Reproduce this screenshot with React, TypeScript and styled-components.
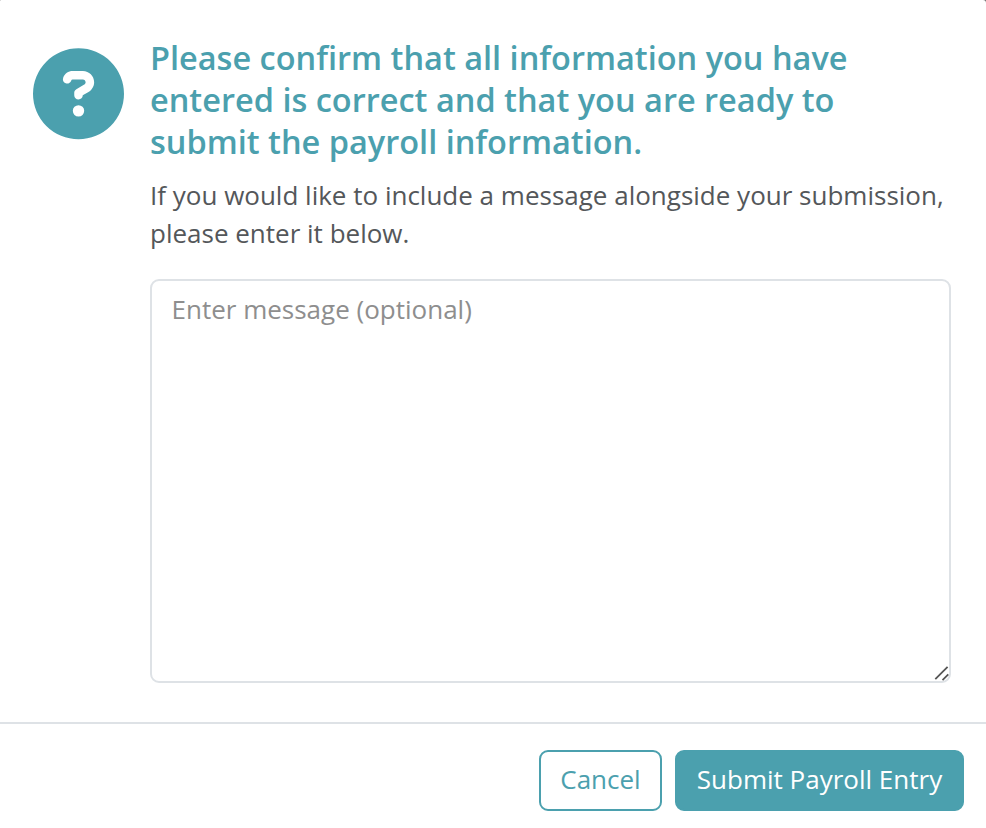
import React from "react";
import styled, { createGlobalStyle } from "styled-components";

const teal = "#4ba0ae";
const line = "#dee2e6";

const GlobalStyle = createGlobalStyle`
  *, *::before, *::after { box-sizing: border-box; }
  body { margin: 0; background: #6d6d6d; font-family: "Open Sans", sans-serif; }
`;

const Dialog = styled.section`
  display: flex;
  flex-direction: column;
  height: 828px;
  border-radius: 1px 3px 0 0;
  background: #fff;
`;

const Body = styled.div`
  display: flex;
  gap: 26px;
  height: 722px;
  padding: 37px 35px 0 33px;
`;

const Icon = styled.svg`
  flex: none;
  width: 91px;
  height: 92px;
  margin-top: 11px;
`;

const Content = styled.div`
  flex: 1;
  min-width: 0;
`;

const Title = styled.h1`
  margin: 0;
  color: ${teal};
  font-size: 32.5px;
  font-weight: 600;
  line-height: 42px;
  white-space: nowrap;
`;

const Description = styled.p`
  margin: 13px 0 27px;
  color: #54575a;
  font-size: 26px;
  line-height: 38px;
  white-space: nowrap;
`;

const Field = styled.div`
  display: grid;
  height: 404px;
`;

const Message = styled.textarea`
  grid-area: 1 / 1;
  width: 100%;
  height: 404px;
  padding: 9px 19.5px;
  border: 2px solid ${line};
  border-radius: 9px;
  outline: none;
  resize: none;
  color: #54575a;
  font: 26px/38px "Open Sans", sans-serif;
  &::placeholder { color: #8e8e8e; opacity: 1; }
`;

const Grip = styled.svg`
  grid-area: 1 / 1;
  place-self: end;
  width: 17px;
  height: 17px;
  pointer-events: none;
`;

const Footer = styled.footer`
  display: flex;
  flex: 1;
  justify-content: flex-end;
  align-items: flex-start;
  gap: 13px;
  padding: 26px 22px 0;
  border-top: 2px solid ${line};
`;

const Button = styled.button<{ $primary?: boolean }>`
  width: ${(p) => (p.$primary ? 289 : 123)}px;
  height: 61px;
  padding: 0 0 3px;
  border: 2px solid ${teal};
  border-radius: 9px;
  background: ${(p) => (p.$primary ? teal : "#fff")};
  color: ${(p) => (p.$primary ? "#fff" : teal)};
  font: 26px/38px "Open Sans", sans-serif;
  white-space: nowrap;
`;

export default function App() {
  return (
    <>
      <GlobalStyle />
      <Dialog>
        <Body>
          <Icon viewBox="0 -1.7 512 517.6" aria-hidden="true">
            <path fill={teal} d="M256 512A256 256 0 1 0 256 0a256 256 0 1 0 0 512zM169.8 165.3c7.9-22.3 29.1-37.3 52.8-37.3h58.3c34.9 0 63.1 28.3 63.1 63.1c0 22.6-12.1 43.5-31.7 54.8L280 264.4c-.2 13-10.9 23.6-24 23.6c-13.3 0-24-10.7-24-24V250.5c0-8.6 4.6-16.5 12.1-20.8l44.3-25.4c4.7-2.7 7.6-7.7 7.6-13.1c0-8.4-6.8-15.1-15.1-15.1H222.6c-3.4 0-6.4 2.1-7.5 5.3l-.4 1.2c-4.4 12.5-18.2 19-30.6 14.6s-19-18.2-14.6-30.6l.4-1.2zM224 352a32 32 0 1 1 64 0a32 32 0 1 1-64 0z" />
          </Icon>
          <Content>
            <Title>
              Please confirm that all information you have<br />
              entered is correct and that you are ready to<br />
              submit the payroll information.
            </Title>
            <Description>
              If you would like to include a message alongside your submission,<br />
              please enter it below.
            </Description>
            <Field>
              <Message placeholder="Enter message (optional)" />
              <Grip viewBox="0 0 17 17" aria-hidden="true">
                <path d="M1.3 13.2 13.6.9M8.5 14.1l5.8-5.8" stroke="#555" strokeWidth="1.8" />
              </Grip>
            </Field>
          </Content>
        </Body>
        <Footer>
          <Button type="button">Cancel</Button>
          <Button type="button" $primary>Submit Payroll Entry</Button>
        </Footer>
      </Dialog>
    </>
  );
}
